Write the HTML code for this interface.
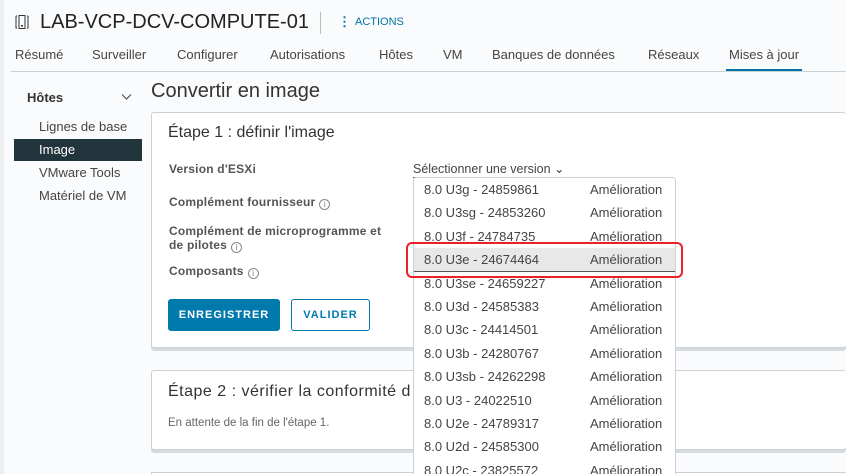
<!DOCTYPE html>
<html style="width:846px;height:474px;overflow:hidden"><head><meta charset="utf-8"><style>
*{margin:0;padding:0;box-sizing:border-box}
body{width:846px;height:474px;overflow:hidden;background:#fafbfc;font-family:"Liberation Sans",sans-serif;color:#333;position:relative}
.a{position:absolute;white-space:nowrap}
.tab{position:absolute;top:47px;font-size:13px;color:#444}
.panel{position:absolute;background:#fff;border:1px solid #ccd1d6;border-radius:3px;box-shadow:0 3px 0 #d7dbe0}
.lbl{position:absolute;font-size:12px;font-weight:bold;color:#555;left:169px;letter-spacing:0.2px}
.i{display:inline-block;width:11px;height:11px;border:1px solid #888;border-radius:50%;font-size:8px;text-align:center;line-height:10px;color:#777;font-weight:normal;margin-left:4px;vertical-align:-1px}
.row{position:absolute;left:0;width:261px;height:23.4px;font-size:13px;color:#444}
.row span{position:absolute;top:4px}
</style></head><body>
<div class="a" style="left:0;top:0;width:4px;height:474px;background:#eceef0"></div>
<svg class="a" style="left:14px;top:14px" width="16" height="16" viewBox="0 0 16 16"><path d="M2 2h1M2 2v12h1M14 2h-1M14 2v12h-1" stroke="#333" fill="none"/><rect x="5" y="1.5" width="6" height="13" stroke="#333" fill="none"/><rect x="7" y="11" width="2" height="1.5" fill="#333"/></svg>
<div class="a" style="left:40px;top:11px;font-size:20px;color:#222">LAB-VCP-DCV-COMPUTE-01</div>
<div class="a" style="left:320px;top:12px;width:1px;height:22px;background:#bbb"></div>
<div class="a" style="left:338px;top:14px;color:#0072a3;font-size:13px;font-weight:bold">⋮</div>
<div class="a" style="left:355px;top:16px;color:#0072a3;font-size:11px">ACTIONS</div>
<div class="tab" style="left:15px">Résumé</div>
<div class="tab" style="left:92px">Surveiller</div>
<div class="tab" style="left:177px">Configurer</div>
<div class="tab" style="left:270px">Autorisations</div>
<div class="tab" style="left:379px">Hôtes</div>
<div class="tab" style="left:443px">VM</div>
<div class="tab" style="left:492px">Banques de données</div>
<div class="tab" style="left:648px">Réseaux</div>
<div class="tab" style="left:729px">Mises à jour</div>
<div class="a" style="left:726px;top:69px;width:76px;height:2px;background:#0072a3"></div>
<div class="a" style="left:11px;top:71px;width:835px;height:1px;background:#ccd1d6"></div>
<div class="a" style="left:27px;top:90px;font-size:13px;font-weight:bold;color:#333">Hôtes</div>
<svg class="a" style="left:121px;top:93px" width="11" height="8"><path d="M1 1.5l4.5 4.5 4.5-4.5" stroke="#555" fill="none" stroke-width="1.2"/></svg>
<div class="a" style="left:39px;top:119px;font-size:13px;color:#444">Lignes de base</div>
<div class="a" style="left:14px;top:139px;width:128px;height:22px;background:#22343c"></div>
<div class="a" style="left:39px;top:142px;font-size:13px;color:#fff">Image</div>
<div class="a" style="left:39px;top:165px;font-size:13px;color:#444">VMware Tools</div>
<div class="a" style="left:39px;top:188px;font-size:13px;color:#444">Matériel de VM</div>
<div class="a" style="left:151px;top:80px;font-size:20px;color:#333">Convertir en image</div>
<div class="panel" style="left:151px;top:112px;width:695px;height:236px;border-right:none"></div>
<div class="a" style="left:168px;top:124px;font-size:16px;color:#333">Étape 1 : définir l'image</div>
<div class="lbl" style="top:162px">Version d'ESXi</div>
<div class="lbl" style="top:195px">Complément fournisseur<span class="i">i</span></div>
<div class="lbl" style="top:224px;line-height:14px">Complément de microprogramme et<br>de pilotes<span class="i">i</span></div>
<div class="lbl" style="top:264px">Composants<span class="i">i</span></div>
<div class="a" style="left:168px;top:299px;width:112px;height:32px;background:#0079ad;border-radius:3px;color:#fff;font-size:11px;font-weight:bold;letter-spacing:1px;text-align:center;line-height:32px">ENREGISTRER</div>
<div class="a" style="left:291px;top:299px;width:79px;height:32px;border:1px solid #0079ad;border-radius:3px;color:#0079ad;font-size:11px;font-weight:bold;letter-spacing:1px;text-align:center;line-height:30px">VALIDER</div>
<div class="panel" style="left:151px;top:370px;width:695px;height:80px;border-right:none"></div>
<div class="a" style="left:168px;top:383px;font-size:16px;letter-spacing:0.5px;color:#333">Étape 2 : vérifier la conformité d</div>
<div class="a" style="left:168px;top:417px;font-size:11.5px;color:#666">En attente de la fin de l'étape 1.</div>
<div class="a" style="left:151px;top:472px;width:695px;height:2px;background:#fff;border-top:1px solid #ccd1d6;border-left:1px solid #ccd1d6"></div>
<div class="a" style="left:413px;top:161px;font-size:12.5px;color:#444;border-bottom:1px solid #555;padding-bottom:1px;width:147px">Sélectionner une version ⌄</div>
<div class="a" style="left:413px;top:177px;width:263px;height:297px;overflow:hidden;background:#fff;border:1px solid #ccd1d6;border-bottom:none;border-radius:3px 3px 0 0">
<div class="row" style="top:0"><span style="left:10px">8.0 U3g - 24859861</span><span style="left:176px">Amélioration</span></div>
<div class="row" style="top:23.4px"><span style="left:10px">8.0 U3sg - 24853260</span><span style="left:176px">Amélioration</span></div>
<div class="row" style="top:46.8px"><span style="left:10px">8.0 U3f - 24784735</span><span style="left:176px">Amélioration</span></div>
<div class="row" style="top:70.2px;background:#e8e8e8;border-bottom:1px solid #555"><span style="left:10px">8.0 U3e - 24674464</span><span style="left:176px">Amélioration</span></div>
<div class="row" style="top:93.6px"><span style="left:10px">8.0 U3se - 24659227</span><span style="left:176px">Amélioration</span></div>
<div class="row" style="top:117px"><span style="left:10px">8.0 U3d - 24585383</span><span style="left:176px">Amélioration</span></div>
<div class="row" style="top:140.4px"><span style="left:10px">8.0 U3c - 24414501</span><span style="left:176px">Amélioration</span></div>
<div class="row" style="top:163.8px"><span style="left:10px">8.0 U3b - 24280767</span><span style="left:176px">Amélioration</span></div>
<div class="row" style="top:187.2px"><span style="left:10px">8.0 U3sb - 24262298</span><span style="left:176px">Amélioration</span></div>
<div class="row" style="top:210.6px"><span style="left:10px">8.0 U3 - 24022510</span><span style="left:176px">Amélioration</span></div>
<div class="row" style="top:234px"><span style="left:10px">8.0 U2e - 24789317</span><span style="left:176px">Amélioration</span></div>
<div class="row" style="top:257.4px"><span style="left:10px">8.0 U2d - 24585300</span><span style="left:176px">Amélioration</span></div>
<div class="row" style="top:280.8px"><span style="left:10px">8.0 U2c - 23825572</span><span style="left:176px">Amélioration</span></div>
</div>
<div class="a" style="left:406px;top:242px;width:277px;height:36px;border:2px solid #e8202a;border-radius:6px"></div>
</body></html>
